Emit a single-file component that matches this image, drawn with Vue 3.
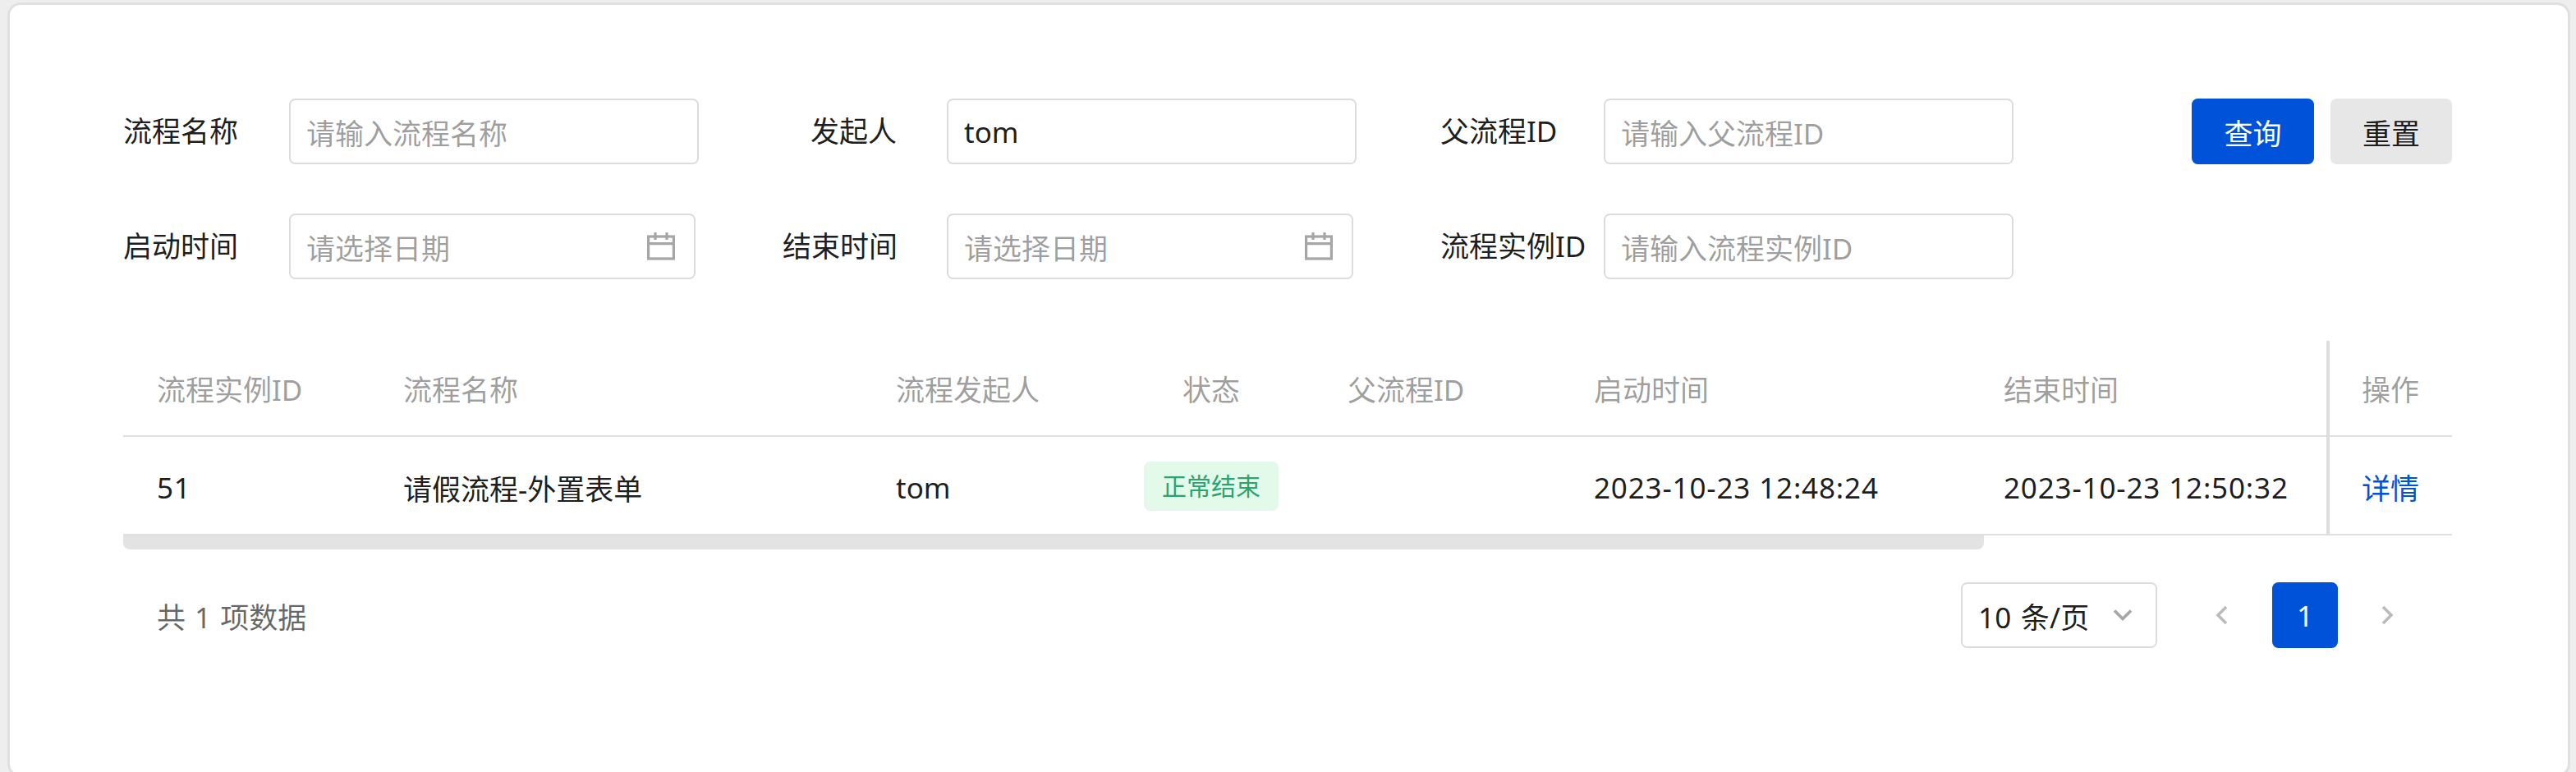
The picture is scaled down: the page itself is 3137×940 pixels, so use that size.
<script setup>
const columns = [
  { label: '流程实例ID', value: '51', cls: 'c-id num' },
  { label: '流程名称', value: '请假流程-外置表单', cls: 'c-name' },
  { label: '流程发起人', value: 'tom', cls: 'c-user' },
  { label: '状态', tag: '正常结束', cls: 'c-status' },
  { label: '父流程ID', value: '', cls: 'c-parent' },
  { label: '启动时间', value: '2023-10-23 12:48:24', cls: 'c-start num' },
  { label: '结束时间', value: '2023-10-23 12:50:32', cls: 'c-end num' },
]
</script>

<template>
  <div class="page">
    <div class="card">
      <div class="search">
        <div class="form">
          <div class="row">
            <div class="item i1">
              <label class="lab">流程名称</label>
              <div class="input w-text"><span class="ph">请输入流程名称</span></div>
            </div>
            <div class="item i2">
              <label class="lab right">发起人</label>
              <div class="input w-text"><span class="val">tom</span></div>
            </div>
            <div class="item i3">
              <label class="lab">父流程ID</label>
              <div class="input w-text"><span class="ph">请输入父流程ID</span></div>
            </div>
          </div>
          <div class="row">
            <div class="item i1">
              <label class="lab">启动时间</label>
              <div class="input w-date">
                <span class="ph">请选择日期</span>
                <svg class="cal" viewBox="0 0 40 40" fill="none" stroke="#a6a6a6" stroke-width="3.2">
                  <rect x="4.6" y="8" width="30.8" height="27" />
                  <path d="M4.6 16.6H35.4M13 3V12M27 3V12" />
                </svg>
              </div>
            </div>
            <div class="item i2">
              <label class="lab right">结束时间</label>
              <div class="input w-date">
                <span class="ph">请选择日期</span>
                <svg class="cal" viewBox="0 0 40 40" fill="none" stroke="#a6a6a6" stroke-width="3.2">
                  <rect x="4.6" y="8" width="30.8" height="27" />
                  <path d="M4.6 16.6H35.4M13 3V12M27 3V12" />
                </svg>
              </div>
            </div>
            <div class="item i3">
              <label class="lab">流程实例ID</label>
              <div class="input w-text"><span class="ph">请输入流程实例ID</span></div>
            </div>
          </div>
        </div>
        <div class="actions">
          <button class="btn primary">查询</button>
          <button class="btn ghost">重置</button>
        </div>
      </div>

      <div class="table">
        <div class="main">
          <div class="scroll">
            <div class="tr head">
              <div v-for="c in columns" :key="c.label" class="td" :class="c.cls">{{ c.label }}</div>
            </div>
            <div class="tr body">
              <div v-for="c in columns" :key="c.label" class="td" :class="c.cls">
                <span v-if="c.tag" class="tag">{{ c.tag }}</span>
                <template v-else>{{ c.value }}</template>
              </div>
            </div>
          </div>
          <div class="fixed">
            <div class="fx head">操作</div>
            <div class="fx body"><a class="link">详情</a></div>
          </div>
        </div>
        <div class="thumb"></div>
      </div>

      <div class="pager">
        <span class="total">共 1 项数据</span>
        <div class="pager-right">
          <div class="select">
            <span class="size">10 条/页</span>
            <svg class="chev-down" viewBox="0 0 40 40" fill="none" stroke="#a6a6a6" stroke-width="3.6">
              <path d="M10 14.5L20 24.5L30 14.5" />
            </svg>
          </div>
          <svg class="chev prev" viewBox="0 0 40 40" fill="none" stroke="#bbbbbb" stroke-width="3.6">
            <path d="M25 10L15 20L25 30" />
          </svg>
          <div class="page-no">1</div>
          <svg class="chev next" viewBox="0 0 40 40" fill="none" stroke="#bbbbbb" stroke-width="3.6">
            <path d="M15 10L25 20L15 30" />
          </svg>
        </div>
      </div>
    </div>
  </div>
</template>

<style>
html, body { margin: 0; background: #eeeeee; overflow: hidden; }
</style>

<style scoped>
.page {
  width: 3137px;
  height: 940px;
  box-sizing: border-box;
  padding: 3px 7px 0 9px;
  background: #eeeeee;
  overflow: hidden;
  font-family: "Noto Sans", "Noto Sans CJK SC", sans-serif;
  font-size: 35px;
  color: rgba(0, 0, 0, 0.9);
}
.card {
  height: 943px;
  box-sizing: border-box;
  background: #fff;
  border: 3px solid #e0e0e0;
  border-radius: 16px;
  padding: 114px 141px 0 138px;
}
.search { display: flex; justify-content: space-between; height: 295px; }
.form { display: flex; flex-direction: column; gap: 60px; }
.row { display: flex; height: 80px; }
.item { display: flex; align-items: center; }
.i1 { width: 803px; }
.i2 { width: 801px; }
.lab { flex: none; line-height: 46px; white-space: nowrap; }
.i1 .lab { width: 202px; }
.i2 .lab { width: 200px; padding-right: 61px; box-sizing: border-box; text-align: right; }
.i3 .lab { width: 199px; }
.input {
  flex: none;
  height: 80px;
  box-sizing: border-box;
  border: 2px solid #dcdcdc;
  border-radius: 7.5px;
  padding: 0 20px 0 19px;
  display: flex;
  align-items: center;
  justify-content: space-between;
  background: #fff;
}
.w-text { width: 499px; }
.w-date { width: 495px; }
.ph { color: rgba(0, 0, 0, 0.4); }
.val { color: rgba(0, 0, 0, 0.9); }
.cal { width: 40px; height: 40px; flex: none; }
.actions { display: flex; gap: 20px; align-items: flex-start; }
.btn {
  height: 80px;
  border: 0;
  border-radius: 7.5px;
  padding: 0;
  font: inherit;
}
.primary { width: 149px; background: #0052d9; color: #fff; }
.ghost { width: 148px; background: #e7e7e7; color: rgba(0, 0, 0, 0.9); }
.table { position: relative; height: 254px; }
.main { display: flex; height: 237px; }
.scroll { width: 2683px; overflow: hidden; flex: none; }
.tr { display: flex; align-items: center; border-bottom: 2px solid #e0e0e0; box-sizing: border-box; }
.tr.head, .fx.head { height: 117px; color: rgba(0, 0, 0, 0.4); }
.tr.body, .fx.body { height: 120px; }
.td { flex: none; box-sizing: border-box; padding-left: 41px; white-space: nowrap; }
.c-id { width: 300px; }
.c-name { width: 600px; }
.c-user { width: 300px; }
.c-status { width: 250px; padding-left: 0; text-align: center; }
.c-parent { width: 300px; }
.c-start { width: 500px; }
.c-end { width: 433px; padding-left: 40px; }
.tr.body .td { padding-top: 5px; }
.tr.body .c-status { padding-top: 2px; }
.body .num { letter-spacing: 0.85px; }
.tag {
  display: inline-block;
  height: 60px;
  line-height: 60px;
  padding: 0 22px;
  border-radius: 7.5px;
  background: #e3f9e9;
  color: #2ba471;
  font-size: 30px;
}
.fixed { flex: 1; border-left: 4px solid #dddddd; }
.fx {
  display: flex;
  align-items: center;
  box-sizing: border-box;
  padding-left: 39px;
  border-bottom: 2px solid #e0e0e0;
}
.fx.body { padding-top: 3px; }
.link { color: #0052d9; }
.thumb {
  position: absolute;
  left: 0;
  top: 237px;
  width: 2266px;
  height: 17px;
  background: #e3e3e3;
  border-radius: 0 0 8px 8px;
}
.pager { display: flex; justify-content: space-between; align-items: center; margin-top: 40px; height: 80px; }
.total { padding-left: 41px; color: rgba(0, 0, 0, 0.6); word-spacing: 2px; }
.pager-right { display: flex; align-items: center; }
.select {
  width: 239px;
  height: 80px;
  box-sizing: border-box;
  border: 2px solid #dcdcdc;
  border-radius: 7.5px;
  padding: 0 20px 0 19px;
  display: flex;
  align-items: center;
  justify-content: space-between;
}
.size { word-spacing: 2px; letter-spacing: 0.2px; }
.chev-down { width: 40px; height: 40px; flex: none; }
.chev { width: 40px; height: 40px; flex: none; }
.prev { margin-left: 59px; }
.page-no {
  width: 80px;
  height: 80px;
  margin-left: 41px;
  margin-right: 40px;
  border-radius: 7.5px;
  background: #0052d9;
  color: #fff;
  display: flex;
  align-items: center;
  justify-content: center;
}
.next { margin-right: 59px; }
</style>
